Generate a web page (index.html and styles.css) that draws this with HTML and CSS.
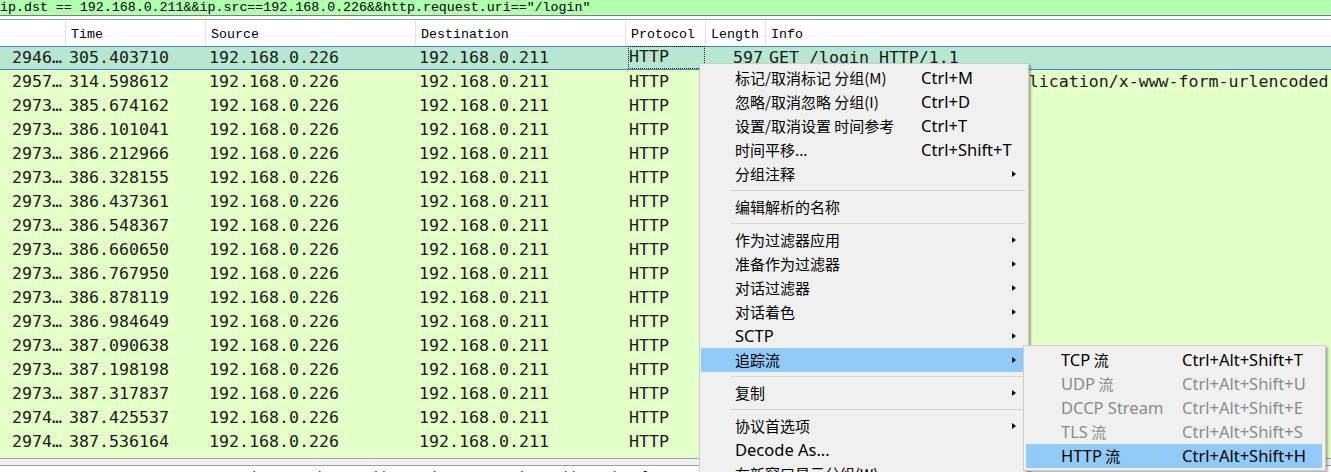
FILE: index.html
```html
<!DOCTYPE html>
<html lang="zh-CN">
<head>
<meta charset="utf-8">
<title>Wireshark</title>
<link rel="stylesheet" href="styles.css">
</head>
<body>
<div class="app">
  <div class="filter">ip.dst == 192.168.0.211&amp;&amp;ip.src==192.168.0.226&amp;&amp;http.request.uri=="/login"</div>
  <div class="gap"></div>
  <div class="head">
    <div class="hc"></div>
    <div class="hc">Time</div>
    <div class="hc">Source</div>
    <div class="hc">Destination</div>
    <div class="hc">Protocol</div>
    <div class="hc">Length</div>
    <div class="hc">Info</div>
  </div>
  <div class="list">
    <div class="row sel"><span class="c no">2946…</span><span class="c">305.403710</span><span class="c">192.168.0.226</span><span class="c">192.168.0.211</span><span class="c focus">HTTP</span><span class="c len">597</span><span class="c info">GET /login HTTP/1.1</span></div>
    <div class="row"><span class="c no">2957…</span><span class="c">314.598612</span><span class="c">192.168.0.226</span><span class="c">192.168.0.211</span><span class="c">HTTP</span><span class="c len">651</span><span class="c info">POST /login HTTP/1.1  (application/x-www-form-urlencoded)</span></div>
    <div class="row"><span class="c no">2973…</span><span class="c">385.674162</span><span class="c">192.168.0.226</span><span class="c">192.168.0.211</span><span class="c">HTTP</span><span class="c len">597</span><span class="c info">GET /login HTTP/1.1</span></div>
    <div class="row"><span class="c no">2973…</span><span class="c">386.101041</span><span class="c">192.168.0.226</span><span class="c">192.168.0.211</span><span class="c">HTTP</span><span class="c len">597</span><span class="c info">GET /login HTTP/1.1</span></div>
    <div class="row"><span class="c no">2973…</span><span class="c">386.212966</span><span class="c">192.168.0.226</span><span class="c">192.168.0.211</span><span class="c">HTTP</span><span class="c len">597</span><span class="c info">GET /login HTTP/1.1</span></div>
    <div class="row"><span class="c no">2973…</span><span class="c">386.328155</span><span class="c">192.168.0.226</span><span class="c">192.168.0.211</span><span class="c">HTTP</span><span class="c len">597</span><span class="c info">GET /login HTTP/1.1</span></div>
    <div class="row"><span class="c no">2973…</span><span class="c">386.437361</span><span class="c">192.168.0.226</span><span class="c">192.168.0.211</span><span class="c">HTTP</span><span class="c len">597</span><span class="c info">GET /login HTTP/1.1</span></div>
    <div class="row"><span class="c no">2973…</span><span class="c">386.548367</span><span class="c">192.168.0.226</span><span class="c">192.168.0.211</span><span class="c">HTTP</span><span class="c len">597</span><span class="c info">GET /login HTTP/1.1</span></div>
    <div class="row"><span class="c no">2973…</span><span class="c">386.660650</span><span class="c">192.168.0.226</span><span class="c">192.168.0.211</span><span class="c">HTTP</span><span class="c len">597</span><span class="c info">GET /login HTTP/1.1</span></div>
    <div class="row"><span class="c no">2973…</span><span class="c">386.767950</span><span class="c">192.168.0.226</span><span class="c">192.168.0.211</span><span class="c">HTTP</span><span class="c len">597</span><span class="c info">GET /login HTTP/1.1</span></div>
    <div class="row"><span class="c no">2973…</span><span class="c">386.878119</span><span class="c">192.168.0.226</span><span class="c">192.168.0.211</span><span class="c">HTTP</span><span class="c len">597</span><span class="c info">GET /login HTTP/1.1</span></div>
    <div class="row"><span class="c no">2973…</span><span class="c">386.984649</span><span class="c">192.168.0.226</span><span class="c">192.168.0.211</span><span class="c">HTTP</span><span class="c len">597</span><span class="c info">GET /login HTTP/1.1</span></div>
    <div class="row"><span class="c no">2973…</span><span class="c">387.090638</span><span class="c">192.168.0.226</span><span class="c">192.168.0.211</span><span class="c">HTTP</span><span class="c len">597</span><span class="c info">GET /login HTTP/1.1</span></div>
    <div class="row"><span class="c no">2973…</span><span class="c">387.198198</span><span class="c">192.168.0.226</span><span class="c">192.168.0.211</span><span class="c">HTTP</span><span class="c len">597</span><span class="c info">GET /login HTTP/1.1</span></div>
    <div class="row"><span class="c no">2973…</span><span class="c">387.317837</span><span class="c">192.168.0.226</span><span class="c">192.168.0.211</span><span class="c">HTTP</span><span class="c len">597</span><span class="c info">GET /login HTTP/1.1</span></div>
    <div class="row"><span class="c no">2974…</span><span class="c">387.425537</span><span class="c">192.168.0.226</span><span class="c">192.168.0.211</span><span class="c">HTTP</span><span class="c len">597</span><span class="c info">GET /login HTTP/1.1</span></div>
    <div class="row"><span class="c no">2974…</span><span class="c">387.536164</span><span class="c">192.168.0.226</span><span class="c">192.168.0.211</span><span class="c">HTTP</span><span class="c len">597</span><span class="c info">GET /login HTTP/1.1</span></div>
  </div>
  <div class="bottom">
    <div class="details">&gt; Frame 29461: 597 bytes on wire (4776 bits), 597 bytes captured (4776 bits) on interface \Device\NPF_Loopback, id 0</div>
  </div>
</div>

<div class="menu">
  <div class="mi"><span class="lb">标记/取消标记 分组(M)</span><span class="k">Ctrl+M</span></div>
  <div class="mi"><span class="lb">忽略/取消忽略 分组(I)</span><span class="k">Ctrl+D</span></div>
  <div class="mi"><span class="lb">设置/取消设置 时间参考</span><span class="k">Ctrl+T</span></div>
  <div class="mi"><span class="lb">时间平移...</span><span class="k">Ctrl+Shift+T</span></div>
  <div class="mi sub"><span class="lb">分组注释</span></div>
  <div class="sep"></div>
  <div class="mi"><span class="lb">编辑解析的名称</span></div>
  <div class="sep"></div>
  <div class="mi sub"><span class="lb">作为过滤器应用</span></div>
  <div class="mi sub"><span class="lb">准备作为过滤器</span></div>
  <div class="mi sub"><span class="lb">对话过滤器</span></div>
  <div class="mi sub"><span class="lb">对话着色</span></div>
  <div class="mi sub"><span class="lb en">SCTP</span></div>
  <div class="mi sub hl"><span class="lb">追踪流</span></div>
  <div class="sep"></div>
  <div class="mi sub"><span class="lb">复制</span></div>
  <div class="sep"></div>
  <div class="mi sub"><span class="lb">协议首选项</span></div>
  <div class="mi"><span class="lb en">Decode As...</span></div>
  <div class="mi"><span class="lb">在新窗口显示分组(W)</span></div>
</div>

<div class="menu submenu">
  <div class="mi"><span class="lb"><span class="en">TCP</span> 流</span><span class="k">Ctrl+Alt+Shift+T</span></div>
  <div class="mi dis"><span class="lb"><span class="en">UDP</span> 流</span><span class="k">Ctrl+Alt+Shift+U</span></div>
  <div class="mi dis"><span class="lb en">DCCP Stream</span><span class="k">Ctrl+Alt+Shift+E</span></div>
  <div class="mi dis"><span class="lb"><span class="en">TLS</span> 流</span><span class="k">Ctrl+Alt+Shift+S</span></div>
  <div class="mi hl"><span class="lb"><span class="en">HTTP</span> 流</span><span class="k">Ctrl+Alt+Shift+H</span></div>
</div>
</body>
</html>
```

FILE: styles.css
```css
html, body {
  margin: 0;
  padding: 0;
}

body {
  width: 1331px;
  height: 472px;
  overflow: hidden;
  position: relative;
  background: #ffffff;
}

.app {
  display: flex;
  flex-direction: column;
  width: 1331px;
  height: 472px;
}

.filter {
  height: 15px;
  line-height: 15px;
  background: #afffaf;
  border-bottom: 1px solid #7d7d7d;
  font-family: "Liberation Mono", monospace;
  font-size: 13.3px;
  color: #000;
  white-space: nowrap;
  overflow: hidden;
  flex: none;
}

.gap {
  height: 3px;
  background: #ffffff;
  flex: none;
}

.head {
  display: grid;
  grid-template-columns: 65px 140px 210px 210px 80px 60px 1fr;
  height: 26px;
  border-top: 1px solid #a0a0a0;
  background: #ffffff;
  font-family: "Liberation Mono", monospace;
  font-size: 13.3px;
  color: #000;
  flex: none;
}

.hc {
  box-sizing: border-box;
  padding: 2px 0 0 5px;
  display: flex;
  align-items: center;
  white-space: nowrap;
}

.hc + .hc {
  border-left: 1px solid #e3e3e3;
}

.list {
  height: 412px;
  background: #e4ffc7;
  overflow: hidden;
  flex: none;
  font-family: "DejaVu Sans Mono", monospace;
  font-size: 16.6px;
  color: #1a1a1a;
}

.row {
  display: grid;
  grid-template-columns: 65px 140px 210px 210px 80px 60px 1fr;
  height: 24px;
  align-items: center;
  white-space: nowrap;
}

.row.sel {
  background: #b7e7d1;
  box-shadow: inset 0 1px 0 #3b8bd6, inset 0 -1px 0 #3b8bd6;
}

.c {
  padding-left: 4px;
  line-height: 24px;
  height: 24px;
  box-sizing: border-box;
}

.c.info {
  white-space: pre;
}

.c.no {
  text-align: right;
  padding-left: 0;
  padding-right: 3px;
}

.c.len {
  text-align: right;
  padding-left: 0;
  padding-right: 2px;
}

.c.focus {
  outline: 1px dotted #222;
  outline-offset: -1px;
  margin-left: 3px;
  padding-left: 1px;
  line-height: 22px;
  height: 23px;
  margin-top: -1px;
}

.bottom {
  flex: 1;
  border-top: 1px solid #a0a0a0;
  background: #f0f0f0;
  overflow: hidden;
}

.details {
  margin-top: 6px;
  border-top: 1px solid #a0a0a0;
  background: #ffffff;
  height: 20px;
  padding: 4px 0 0 130px;
  line-height: 12px;
  font-family: "Noto Sans", "Noto Sans CJK SC", sans-serif;
  font-size: 13px;
  color: #000;
  white-space: nowrap;
}

/* context menu */
.menu {
  position: absolute;
  left: 699px;
  top: 63px;
  width: 328px;
  padding: 2px 0;
  background: #f0f0f0;
  border: 1px solid #cccccc;
  box-shadow: 2px 2px 2px rgba(0, 0, 0, 0.3);
  font-family: "Noto Sans CJK SC", "Noto Sans", sans-serif;
  font-size: 15px;
  color: #000;
}

.mi {
  position: relative;
  display: grid;
  grid-template-columns: 186px 1fr;
  align-items: center;
  height: 24px;
  margin: 0 4px 0 1px;
  padding-left: 34px;
  white-space: nowrap;
}

.lb, .k {
  line-height: 24px;
}

.k, .en {
  font-family: "Noto Sans", sans-serif;
  font-size: 16.5px;
}

.sub::after {
  content: "";
  position: absolute;
  right: 8px;
  top: 9px;
  border-left: 4px solid #000;
  border-top: 3.5px solid transparent;
  border-bottom: 3.5px solid transparent;
}

.sep {
  height: 1px;
  margin: 4px 3px 4px 31px;
  background: #d6d6d6;
}

.hl {
  background: #91c9f7;
}

.dis {
  color: #8b8b8b;
}

.submenu {
  left: 1023px;
  top: 345px;
  width: 301px;
}

.submenu .mi {
  grid-template-columns: 121px 1fr;
  margin: 0 3px 0 2px;
  padding-left: 35px;
}
```
